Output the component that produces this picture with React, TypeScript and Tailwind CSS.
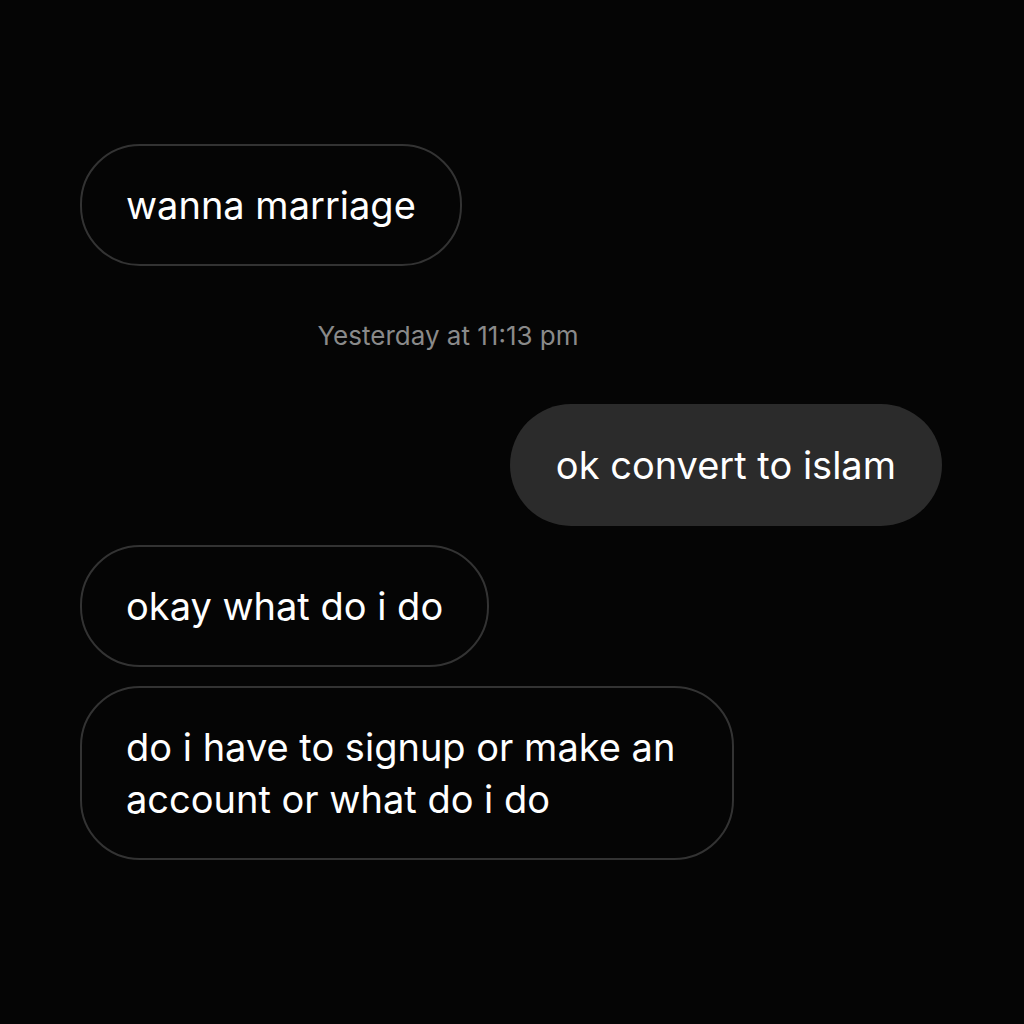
import React from 'react';

type Msg = { id: number; text: string; mine?: boolean };

const before: Msg[] = [{ id: 1, text: 'wanna marriage' }];

const after: Msg[] = [
  { id: 2, text: 'ok convert to islam', mine: true },
  { id: 3, text: 'okay what do i do' },
  { id: 4, text: 'do i have to signup or make an account or what do i do' },
];

const Bubble: React.FC<{ msg: Msg }> = ({ msg }) => {
  if (msg.mine) {
    return (
      <div className="flex justify-end">
        <div className="rounded-full bg-[#2b2b2b] px-[46px] py-[35px] text-[38px] leading-[52px] text-white">
          {msg.text}
        </div>
      </div>
    );
  }
  return (
    <div className="flex justify-start">
      <div className="max-w-[654px] rounded-[60px] border-2 border-[#333333] px-[44px] py-[33px] text-[38px] leading-[52px] text-white">
        {msg.text}
      </div>
    </div>
  );
};

export default function App() {
  return (
    <div
      className="flex h-[1024px] w-[1024px] flex-col bg-[#050505] pl-[80px] pr-[82px] pt-[144px]"
      style={{ fontFamily: 'Inter, "Liberation Sans", sans-serif' }}
    >
      {before.map((m) => (
        <Bubble key={m.id} msg={m} />
      ))}
      <div className="mt-[54px] mb-[52px] pr-[126px] text-center text-[26px] leading-[32px] text-[#8a8a8a]">
        Yesterday at 11:13 pm
      </div>
      <div className="flex flex-col gap-[19px]">
        {after.map((m) => (
          <Bubble key={m.id} msg={m} />
        ))}
      </div>
    </div>
  );
}
